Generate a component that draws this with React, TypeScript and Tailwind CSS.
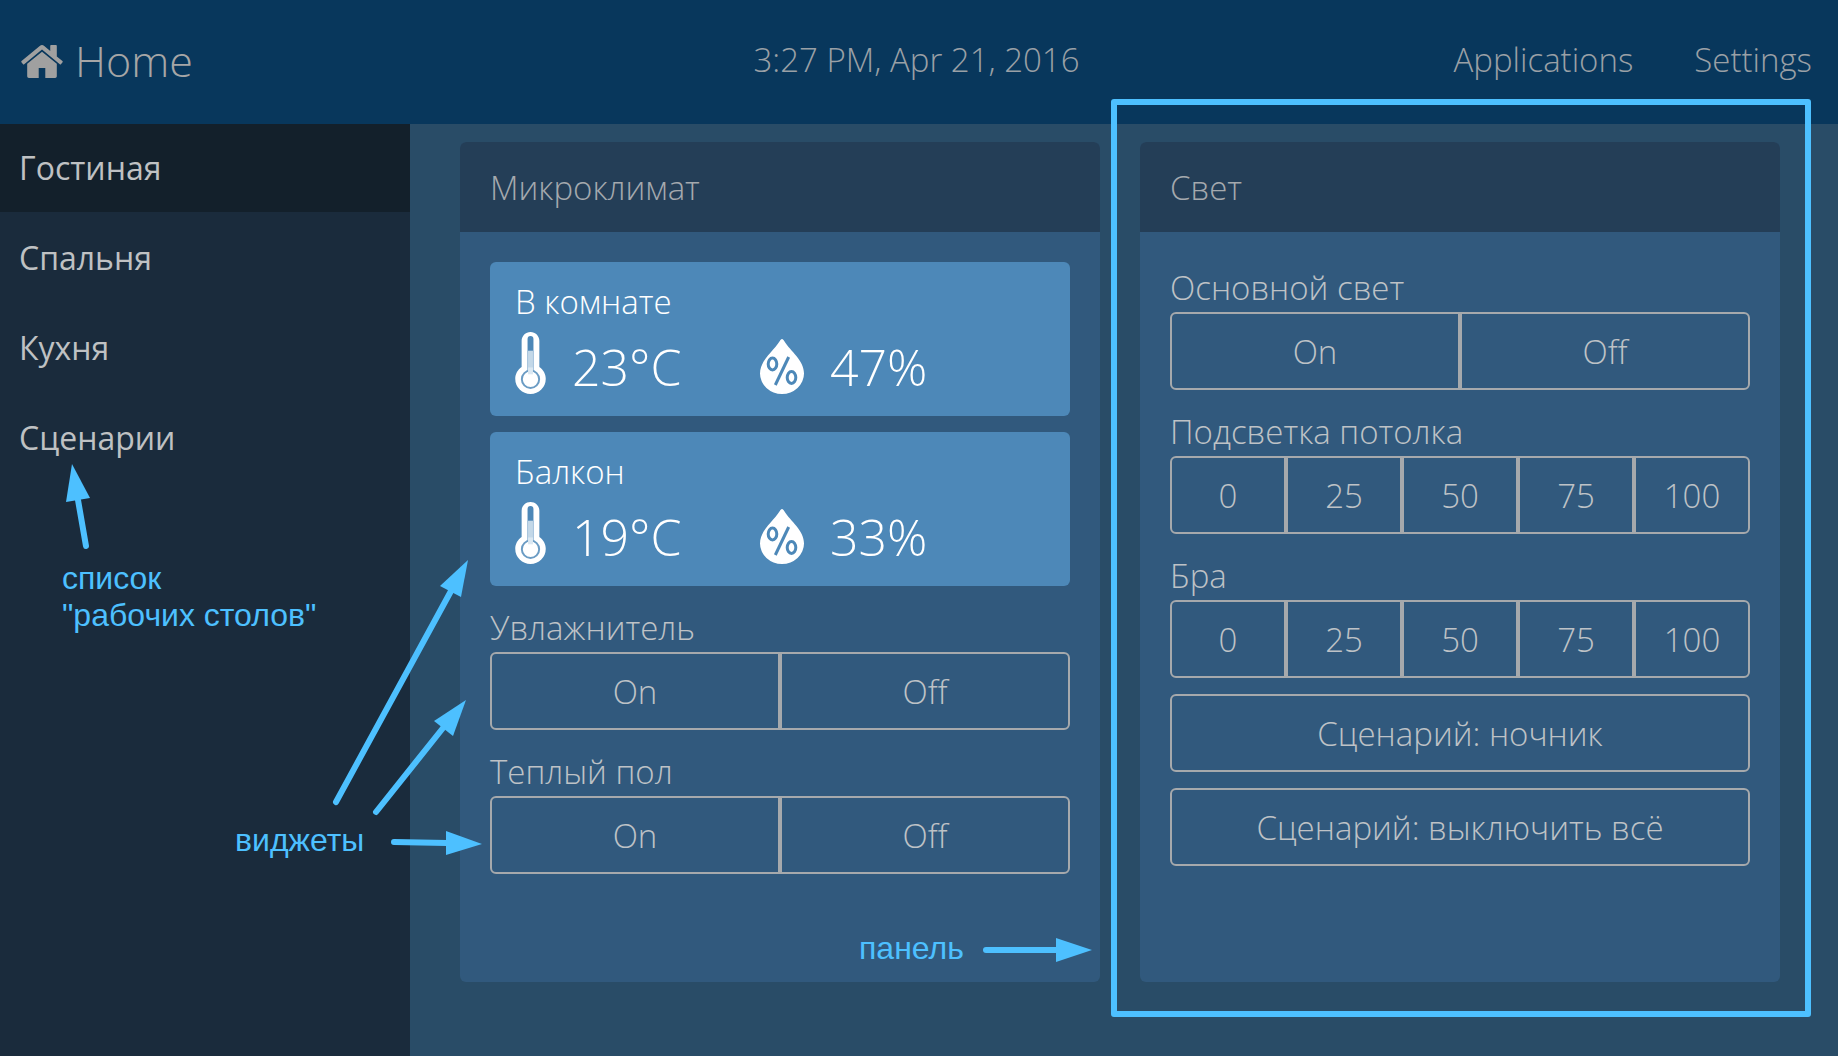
import type { ReactNode } from "react";

const rooms = ["Гостиная", "Спальня", "Кухня", "Сценарии"];

function HomeIcon() {
  return (
    <svg viewBox="89 253 1614 1283" className="h-[33px] w-[42px]" fill="#a0a0a0" aria-hidden="true">
      <path d="M1472 992v480q0 26-19 45t-45 19h-384v-384h-256v384h-384q-26 0-45-19t-19-45v-480q0-1 .5-3t.5-3l575-474 575 474q1 2 1 6zm223-69l-62 74q-8 9-21 11h-3q-13 0-21-7l-692-577-692 577q-12 8-24 7-13-2-21-11l-62-74q-8-10-7-23.5t11-21.5l719-599q32-26 76-26t76 26l244 204v-195q0-14 9-23t23-9h192q14 0 23 9t9 23v408l219 182q10 8 11 21.5t-7 23.5z" />
    </svg>
  );
}

function ThermometerIcon() {
  return (
    <svg viewBox="0 0 31 63" className="h-[62px] w-[31px]" aria-hidden="true">
      <path
        fill="#fff"
        d="M15.5 0C20.5 0 24.5 4 24.5 9V35.5C28.5 38.2 31 42.6 31 47.5A15.5 15.5 0 0 1 0 47.5C0 42.6 2.5 38.2 6.5 35.5V9C6.5 4 10.5 0 15.5 0Z"
      />
      <path fill="#4d88b8" d="M12.5 7a3 3 0 0 1 6 0V20h-6z" />
      <path fill="#c3d8e8" d="M12.5 19h6v22h-6z" />
      <path stroke="#a5c3dc" d="M12.5 19v20M18.5 19v20" fill="none" />
      <circle cx="15.5" cy="48" r="8.8" fill="#fff" stroke="#6b9cc4" strokeWidth="2" />
      <path fill="#dbe8f2" d="M13 36h5v7h-5z" />
    </svg>
  );
}

function HumidityIcon() {
  return (
    <svg viewBox="0 0 44 55" className="h-[55px] w-[44px]" aria-hidden="true">
      <path fill="#fff" d="M22 0C23 0 23.6 1 24.2 2C31 13 44 21 44 34.5A22 20.5 0 0 1 0 34.5C0 21 13 13 19.8 2C20.4 1 21 0 22 0Z" />
      <g fill="none" stroke="#4d88b8" strokeWidth="3">
        <ellipse cx="12.5" cy="25" rx="4.3" ry="6" />
        <ellipse cx="31.5" cy="38.5" rx="4.3" ry="6" />
        <path d="M28.7 18L15.3 46" />
      </g>
    </svg>
  );
}

function Panel({ title, children, highlighted }: { title: string; children: ReactNode; highlighted?: boolean }) {
  return (
    <section className="relative min-h-[840px] flex-1 rounded-md bg-[#31597d]">
      <h2 className="flex h-[90px] items-center rounded-t-md bg-[#243e57] px-[30px] pt-[2px] text-[#a4a9ae]">{title}</h2>
      <div className="flex flex-col gap-4 p-[30px]">{children}</div>
      {highlighted && (
        <div className="pointer-events-none absolute -top-[43px] -right-[31px] -bottom-[35px] -left-[29px] rounded-[3px] border-6 border-[#4dc0ff]" />
      )}
    </section>
  );
}

function ClimateCard({ name, temperature, humidity }: { name: string; temperature: string; humidity: string }) {
  return (
    <article className="rounded-md bg-[#4d88b8] px-[25px] pt-[14px] pb-[22px] text-white">
      <h3 className="pt-[2px] leading-[48px]">{name}</h3>
      <div className="grid h-[68px] grid-cols-[245px_1fr] items-end text-[50px] leading-[54px]">
        <div className="flex items-end gap-[26px]">
          <ThermometerIcon />
          <span>{temperature}</span>
        </div>
        <div className="flex items-end gap-[26px]">
          <HumidityIcon />
          <span>{humidity}</span>
        </div>
      </div>
    </article>
  );
}

const buttonStyle = "border-2 border-[#a6a9ac] pt-[2px]";

function ButtonGroup({ label, options }: { label: string; options: string[] }) {
  return (
    <div role="group" aria-label={label}>
      <div className="pt-[2px] leading-[48px]">{label}</div>
      <div className="flex h-[78px]">
        {options.map((option) => (
          <button key={option} type="button" className={buttonStyle + " flex-1 first:rounded-l-md last:rounded-r-md"}>
            {option}
          </button>
        ))}
      </div>
    </div>
  );
}

function SceneButton({ children }: { children: ReactNode }) {
  return (
    <button type="button" className={buttonStyle + " h-[78px] rounded-md"}>
      {children}
    </button>
  );
}

const arrows = [
  { line: "M86 546L78 500", head: "72,464 66,502 90,498" },
  { line: "M336 802L451 591", head: "468,560 440,586 461,597" },
  { line: "M376 812L443 728", head: "466,700 434,721 453,736" },
  { line: "M394 842L447 843", head: "482,844 446,831 446,855" },
  { line: "M986 950H1057", head: "1092,950 1056,938 1056,962" },
];

function Annotations() {
  return (
    <div className="pointer-events-none absolute inset-0 overflow-hidden font-['Liberation_Sans',sans-serif] text-[32px] leading-[37px] font-normal whitespace-nowrap text-[#4dc0ff]">
      <svg width="1842" height="1056" className="absolute top-0 left-0" aria-hidden="true">
        {arrows.map((arrow) => (
          <g key={arrow.head}>
            <path d={arrow.line} stroke="#4dc0ff" strokeWidth="6" strokeLinecap="round" />
            <polygon points={arrow.head} fill="#4dc0ff" />
          </g>
        ))}
      </svg>
      <p className="absolute top-[560px] left-[62px]">
        список
        <br />
        "рабочих столов"
      </p>
      <p className="absolute top-[822px] left-[235px]">виджеты</p>
      <p className="absolute top-[930px] left-[859px]">панель</p>
    </div>
  );
}

export default function App() {
  return (
    <div className="relative min-h-screen bg-white pr-1 font-['Open_Sans',sans-serif] text-[33px] font-light text-[#bec2c6]">
      <div className="flex min-h-screen flex-col">
        <header className="flex h-[124px] items-center bg-[#08375c] px-[26px] text-[#9aa0a6]">
          <a href="#home" className="-ml-[5px] flex flex-1 items-center gap-[12px] pb-[2px] text-[43px] text-[#a6a6a6]">
            <HomeIcon />
            Home
          </a>
          <time dateTime="2016-04-21T15:27" className="pb-[4px]">
            3:27 PM, Apr 21, 2016
          </time>
          <nav className="flex flex-1 justify-end gap-[61px] pb-[4px]">
            <a href="#applications">Applications</a>
            <a href="#settings">Settings</a>
          </nav>
        </header>
        <div className="flex flex-1">
          <nav className="flex w-[410px] shrink-0 flex-col gap-[2px] bg-[#1a2b3c] text-[32px] font-normal text-[#bfc1c3]">
            {rooms.map((room, index) => (
              <a
                key={room}
                href={"#room-" + index}
                className="flex h-[88px] items-center px-[19px] aria-[current=page]:bg-[#13202b]"
                aria-current={index === 0 ? "page" : undefined}
              >
                {room}
              </a>
            ))}
          </nav>
          <main className="flex flex-1 items-start gap-10 bg-[#294c67] pt-[18px] pr-[58px] pl-[50px]">
            <Panel title="Микроклимат">
              <ClimateCard name="В комнате" temperature="23°C" humidity="47%" />
              <ClimateCard name="Балкон" temperature="19°C" humidity="33%" />
              <ButtonGroup label="Увлажнитель" options={["On", "Off"]} />
              <ButtonGroup label="Теплый пол" options={["On", "Off"]} />
            </Panel>
            <Panel title="Свет" highlighted>
              <ButtonGroup label="Основной свет" options={["On", "Off"]} />
              <ButtonGroup label="Подсветка потолка" options={["0", "25", "50", "75", "100"]} />
              <ButtonGroup label="Бра" options={["0", "25", "50", "75", "100"]} />
              <SceneButton>Сценарий: ночник</SceneButton>
              <SceneButton>Сценарий: выключить всё</SceneButton>
            </Panel>
          </main>
        </div>
      </div>
      <Annotations />
    </div>
  );
}
